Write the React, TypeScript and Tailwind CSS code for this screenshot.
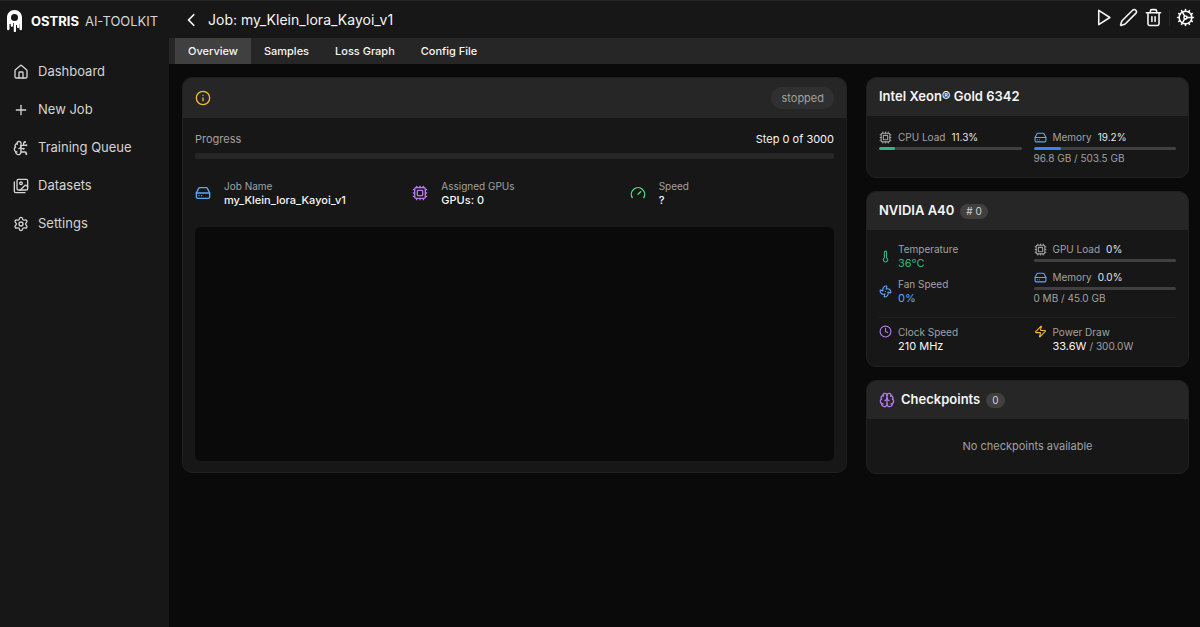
import type { ReactNode } from 'react';
import {
  Brain,
  BrainCircuit,
  Clock,
  Cog,
  Cpu,
  Fan,
  HardDrive,
  House,
  Info,
  Pen,
  Plus,
  Settings,
  Thermometer,
  Zap,
} from 'lucide-react';
import { FaChevronLeft } from 'react-icons/fa6';

type IconProps = { className?: string };

function Stroke({ className, children }: IconProps & { children: ReactNode }) {
  return (
    <svg
      viewBox="0 0 24 24"
      fill="none"
      stroke="currentColor"
      strokeWidth={2}
      strokeLinecap="round"
      strokeLinejoin="round"
      className={className}
    >
      {children}
    </svg>
  );
}

function ImagesIcon({ className }: IconProps) {
  return (
    <Stroke className={className}>
      <path d="M18 22H4a2 2 0 0 1-2-2V6" />
      <path d="m22 13-1.296-1.296a2.41 2.41 0 0 0-3.408 0L11 18" />
      <circle cx="12" cy="8" r="2" />
      <rect width="16" height="16" x="6" y="2" rx="2" />
    </Stroke>
  );
}

function PlayIcon({ className }: IconProps) {
  return (
    <Stroke className={className}>
      <polygon points="6 3 20 12 6 21 6 3" />
    </Stroke>
  );
}

function TrashIcon({ className }: IconProps) {
  return (
    <Stroke className={className}>
      <path d="M3 6h18" />
      <path d="M19 6v14c0 1-1 2-2 2H7c-1 0-2-1-2-2V6" />
      <path d="M8 6V4c0-1 1-2 2-2h4c1 0 2 1 2 2v2" />
      <path d="M10 11v6" />
      <path d="M14 11v6" />
    </Stroke>
  );
}

function GaugeIcon({ className }: IconProps) {
  return (
    <Stroke className={className}>
      <path d="m12 14 4-4" />
      <path d="M3.34 19a10 10 0 1 1 17.32 0" />
    </Stroke>
  );
}

function Logo({ className }: IconProps) {
  return (
    <svg viewBox="0 0 30 44" fill="currentColor" className={className}>
      <path
        fillRule="evenodd"
        d="M15 0C6.500 0 0 6.500 0 15V38a2.500 2.500 0 0 0 5 0V28h2.500V31.500a2.250 2.250 0 0 0 4.500 0V26h1.500V42a2.250 2.250 0 0 0 4.500 0V30h2V34a2.250 2.250 0 0 0 4.500 0V28H25V38a2.500 2.500 0 0 0 5 0V15C30 6.500 23.500 0 15 0ZM15 8a7 7 0 1 1 0 14a7 7 0 1 1 0-14Z"
      />
    </svg>
  );
}

const NAV = [
  { label: 'Dashboard', icon: House },
  { label: 'New Job', icon: Plus },
  { label: 'Training Queue', icon: BrainCircuit },
  { label: 'Datasets', icon: ImagesIcon },
  { label: 'Settings', icon: Settings },
];

const TABS = ['Overview', 'Samples', 'Loss Graph', 'Config File'];

const JOB_STATS = [
  { label: 'Job Name', value: 'my_Klein_lora_Kayoi_v1', icon: HardDrive, color: 'text-[#60a5fa]' },
  { label: 'Assigned GPUs', value: 'GPUs: 0', icon: Cpu, color: 'text-[#b57bee]' },
  { label: 'Speed', value: '?', icon: GaugeIcon, color: 'text-[#4ade80]' },
];

function Sidebar() {
  return (
    <aside className="flex w-[169px] shrink-0 flex-col bg-neutral-900">
      <div className="flex h-10 items-center pl-[7px] text-[13px] leading-5">
        <Logo className="h-[22px] w-[15px] text-white" />
        <span className="ml-[9px] font-bold text-white">OSTRIS</span>
        <span className="ml-[6px] text-neutral-300">AI-TOOLKIT</span>
      </div>
      <nav className="mt-3">
        <ul>
          {NAV.map(({ label, icon: Icon }) => (
            <li key={label}>
              <a
                href="#"
                className="flex h-[38px] items-center gap-[9px] pl-[13px] text-[13px] text-neutral-300"
              >
                <Icon className="size-4" />
                {label}
              </a>
            </li>
          ))}
        </ul>
      </nav>
    </aside>
  );
}

function TopBar() {
  return (
    <header className="flex h-[37px] items-center bg-neutral-900 pr-[5px] pl-[17px] text-neutral-100">
      <button type="button" aria-label="Back" className="flex w-[11px] justify-center">
        <FaChevronLeft className="size-[14px] shrink-0" />
      </button>
      <h1 className="ml-[11px] text-[14px]">Job: my_Klein_lora_Kayoi_v1</h1>
      <div className="ml-auto flex items-center gap-[6px] self-start pt-[7px]">
        <button type="button" aria-label="Start job">
          <PlayIcon className="size-[19px]" />
        </button>
        <button type="button" aria-label="Edit job">
          <Pen className="size-[19px]" />
        </button>
        <button type="button" aria-label="Delete job">
          <TrashIcon className="size-[19px]" />
        </button>
        <span className="h-4 w-px bg-neutral-800" />
        <button type="button" aria-label="Job options">
          <Cog className="size-[19px]" />
        </button>
      </div>
    </header>
  );
}

function Tabs() {
  return (
    <nav className="flex h-[26px] bg-neutral-800 pl-[6px]">
      {TABS.map((tab, i) => (
        <button
          key={tab}
          type="button"
          className={`px-[13px] text-[11px] font-medium text-neutral-100 ${i === 0 ? 'bg-neutral-700' : ''}`}
        >
          {tab}
        </button>
      ))}
    </nav>
  );
}

function Card({ header, children }: { header: ReactNode; children: ReactNode }) {
  return (
    <section className="overflow-hidden rounded-[10px] border border-[#202020] bg-neutral-900">
      {header}
      {children}
    </section>
  );
}

function SideHeader({ children }: { children: ReactNode }) {
  return (
    <div className="flex h-[38px] items-center bg-neutral-800 px-3 text-[13px] font-semibold text-neutral-100">
      {children}
    </div>
  );
}

function JobCard() {
  return (
    <Card
      header={
        <div className="flex h-10 items-center justify-between bg-neutral-800 px-3">
          <Info className="size-4 text-[#eebc35]" />
          <span className="rounded-full bg-[#303030] px-[10px] text-[11px] leading-[22px] text-neutral-400">
            stopped
          </span>
        </div>
      }
    >
      <div className="px-3 pt-[13px] pb-[11px]">
        <div className="flex items-center justify-between text-[11px] leading-4">
          <span className="text-neutral-400">Progress</span>
          <span className="text-neutral-100">Step 0 of 3000</span>
        </div>
        <div className="mt-[6px] h-[6px] rounded-xs bg-neutral-800" />
        <dl className="mt-5 grid grid-cols-3 gap-[13px]">
          {JOB_STATS.map(({ label, value, icon: Icon, color }) => (
            <div key={label} className="flex items-center gap-[13px]">
              <Icon className={`size-4 ${color}`} />
              <div>
                <dt className="text-[10px] leading-[14px] text-neutral-400">{label}</dt>
                <dd className="text-[11px] leading-[14px] font-medium text-neutral-100">{value}</dd>
              </div>
            </div>
          ))}
        </dl>
        <div className="mt-5 h-[234px] rounded-[6px] bg-neutral-950" />
      </div>
    </Card>
  );
}

type MeterProps = {
  icon: ReactNode;
  label: string;
  value: string;
  percent: number;
  fill: string;
  note?: string;
};

function Meter({ icon, label, value, percent, fill, note }: MeterProps) {
  return (
    <div className="text-[10px] leading-[14px]">
      <div className="flex items-center gap-[6px]">
        {icon}
        <span className="text-neutral-400">{label}</span>
        <span className="text-neutral-200">{value}</span>
      </div>
      <div className="mt-[3px] h-[3px] overflow-hidden rounded-full bg-neutral-700">
        <div className={`h-full rounded-full ${fill}`} style={{ width: `${percent}%` }} />
      </div>
      {note && <p className="mt-px text-neutral-400">{note}</p>}
    </div>
  );
}

function CpuCard() {
  return (
    <Card header={<SideHeader>Intel Xeon® Gold 6342</SideHeader>}>
      <div className="grid grid-cols-2 gap-3 px-3 pt-[14px] pb-3">
        <Meter
          icon={<Cpu className="size-[13px] text-neutral-400" />}
          label="CPU Load"
          value="11.3%"
          percent={11.3}
          fill="bg-[#2fb585]"
        />
        <Meter
          icon={<HardDrive className="size-[13px] text-[#60a5fa]" />}
          label="Memory"
          value="19.2%"
          percent={19.2}
          fill="bg-[#3b82f6]"
          note="96.8 GB / 503.5 GB"
        />
      </div>
    </Card>
  );
}

function Reading({ icon, label, children }: { icon: ReactNode; label: string; children: ReactNode }) {
  return (
    <div className="flex gap-[6px]">
      {icon}
      <div>
        <p className="text-[10px] leading-[14px] text-neutral-400">{label}</p>
        <p className="text-[11px] leading-[14px] text-neutral-100">{children}</p>
      </div>
    </div>
  );
}

function GpuCard() {
  return (
    <Card
      header={
        <SideHeader>
          NVIDIA A40
          <span className="ml-[6px] rounded-full bg-neutral-700 px-[6px] text-[10px] leading-[15px] font-normal text-neutral-300">
            # 0
          </span>
        </SideHeader>
      }
    >
      <div className="px-3 pt-3 pb-[13px]">
        <div className="grid grid-cols-2 gap-3">
          <div className="flex flex-col gap-[7px]">
            <Reading
              icon={<Thermometer className="size-[13px] self-center text-[#2fb585]" />}
              label="Temperature"
            >
              <span className="text-[#2fb585]">36°C</span>
            </Reading>
            <Reading
              icon={<Fan className="size-[13px] self-center text-[#60a5fa]" />}
              label="Fan Speed"
            >
              <span className="text-[#60a5fa]">0%</span>
            </Reading>
          </div>
          <div className="flex flex-col gap-2">
            <Meter
              icon={<Cpu className="size-[13px] text-neutral-400" />}
              label="GPU Load"
              value="0%"
              percent={0}
              fill="bg-[#2fb585]"
            />
            <Meter
              icon={<HardDrive className="size-[13px] text-[#60a5fa]" />}
              label="Memory"
              value="0.0%"
              percent={0}
              fill="bg-[#3b82f6]"
              note="0 MB / 45.0 GB"
            />
          </div>
        </div>
        <div className="mt-3 grid grid-cols-2 gap-3 border-t border-[#202020] pt-[7px]">
          <Reading icon={<Clock className="size-[13px] text-[#b57bee]" />} label="Clock Speed">
            210 MHz
          </Reading>
          <Reading icon={<Zap className="size-[13px] text-[#eebc35]" />} label="Power Draw">
            33.6W <span className="text-[10px] text-neutral-400">/ 300.0W</span>
          </Reading>
        </div>
      </div>
    </Card>
  );
}

function CheckpointsCard() {
  return (
    <Card
      header={
        <SideHeader>
          <Brain className="mr-[6px] size-4 text-[#b57bee]" />
          Checkpoints
          <span className="ml-[6px] rounded-full bg-neutral-700 px-[6px] text-[10px] leading-[15px] font-normal text-neutral-300">
            0
          </span>
        </SideHeader>
      }
    >
      <p className="py-[19px] text-center text-[11px] leading-4 text-neutral-400">
        No checkpoints available
      </p>
    </Card>
  );
}

export default function App() {
  return (
    <div className="flex min-h-screen border-t border-neutral-800 bg-neutral-950 font-['Inter',sans-serif]">
      <Sidebar />
      <div className="min-w-0 flex-1">
        <TopBar />
        <Tabs />
        <main className="grid grid-cols-3 items-start gap-[19px] py-[13px] pr-[11px] pl-[13px]">
          <div className="col-span-2">
            <JobCard />
          </div>
          <div className="flex flex-col gap-[13px]">
            <CpuCard />
            <GpuCard />
            <CheckpointsCard />
          </div>
        </main>
      </div>
    </div>
  );
}
